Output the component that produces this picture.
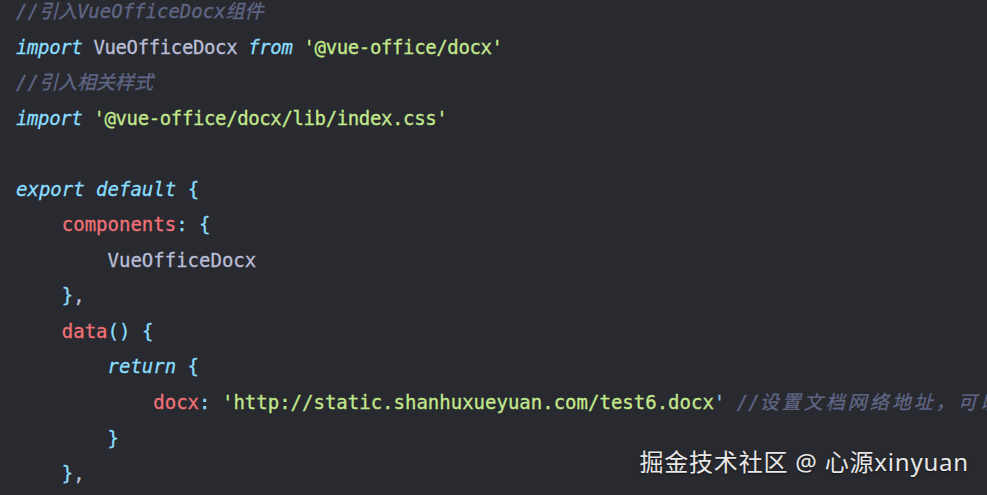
import React from "react";

const kw = "text-[#89ddff] italic";
const str = "text-[#c3e88d]";
const prop = "text-[#f07178]";
const id = "text-[#babed8]";
const punc = "text-[#89ddff]";
const cm = "text-[#5f6685] italic";

function Line({ children, className = "" }) {
  return <div className={"h-[35.55px] whitespace-pre " + className}>{children}</div>;
}

export default function App() {
  return (
    <div className="relative w-[987px] h-[495px] overflow-hidden bg-[#292a2f]">
      <div
        className="pl-[16px] mt-[-6px] text-[19px] leading-[35.55px] [-webkit-text-stroke:0.3px]"
        style={{ fontFamily: '"DejaVu Sans Mono", "Noto Sans CJK SC", monospace' }}
      >
        <Line><span className={cm}>//引入VueOfficeDocx组件</span></Line>
        <Line className="tracking-[-0.38px]">
          <span className={kw}>import</span><span className={id}> VueOfficeDocx </span>
          <span className={kw}>from</span> <span className={str}>'@vue-office/docx'</span>
        </Line>
        <Line><span className={cm}>//引入相关样式</span></Line>
        <Line className="tracking-[-0.38px]">
          <span className={kw}>import</span> <span className={str}>'@vue-office/docx/lib/index.css'</span>
        </Line>
        <Line> </Line>
        <Line>
          <span className={kw}>export</span> <span className={kw}>default</span> <span className={punc}>{"{"}</span>
        </Line>
        <Line>
          {"    "}<span className={prop}>components</span><span className={punc}>:</span> <span className={punc}>{"{"}</span>
        </Line>
        <Line>
          {"        "}<span className={id}>VueOfficeDocx</span>
        </Line>
        <Line>
          {"    "}<span className={punc}>{"}"}</span><span className={id}>,</span>
        </Line>
        <Line>
          {"    "}<span className={prop}>data</span><span className={punc}>()</span> <span className={punc}>{"{"}</span>
        </Line>
        <Line>
          {"        "}<span className={kw}>return</span> <span className={punc}>{"{"}</span>
        </Line>
        <Line>
          {"            "}<span className={prop}>docx</span><span className={punc}>:</span>{" "}
          <span className={str}>'http://static.shanhuxueyuan.com/test6.docx</span>
          <span className="text-[#7fb8e0]">'</span>{" "}
          <span className={cm}>//<span className="tracking-[3px]">设置文档网络地址，可以</span></span>
        </Line>
        <Line>
          {"        "}<span className={punc}>{"}"}</span>
        </Line>
        <Line>
          {"    "}<span className={punc}>{"}"}</span><span className={id}>,</span>
        </Line>
      </div>
      <div
        className="absolute right-[18px] top-[446px] text-[24px] leading-[32px] tracking-[0.8px] text-white/90 whitespace-nowrap [text-shadow:0_1px_2px_rgba(0,0,0,0.6)]"
        style={{ fontFamily: '"Noto Sans", "Noto Sans CJK SC", sans-serif' }}
      >
        掘金技术社区 @ 心源xinyuan
      </div>
    </div>
  );
}
